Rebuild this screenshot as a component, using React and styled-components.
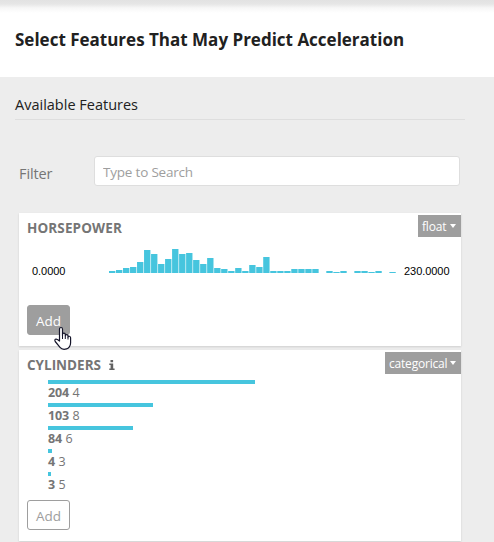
import React from 'react';
import styled, { createGlobalStyle } from 'styled-components';

const GlobalStyle = createGlobalStyle`
  *, *::before, *::after { box-sizing: border-box; }
  body {
    margin: 0;
    overflow: hidden;
    background: #ededed;
    color: #757575;
    font: 14px/20px "Segoe UI", "Open Sans", "Noto Sans", sans-serif;
  }
`;

const Page = styled.div`
  height: 542px;
  overflow: hidden;
  position: relative;
`;

const Header = styled.header`
  height: 77px;
  padding: 27px 15px 0;
  background: linear-gradient(#e2e2e2 0, #e6e6e6 4px, #f7f7f7 8px, #fff 13px);
`;

const Title = styled.h1`
  margin: 0;
  font-size: 17px;
  line-height: 26px;
  font-weight: 700;
  color: #212121;
  white-space: nowrap;
`;

const SectionTitle = styled.h2`
  margin: 0 29px 0 15px;
  padding-top: 16px;
  height: 43px;
  border-bottom: 1px solid #dedede;
  font-size: 14.5px;
  line-height: 23px;
  font-weight: 400;
  color: #212121;
`;

const FilterRow = styled.div`
  display: flex;
  margin: 36px 34px 0 19px;
  height: 30px;
`;

const FilterLabel = styled.label`
  width: 75px;
  padding-top: 8px;
  font-size: 14.5px;
  letter-spacing: -0.1px;
`;

const SearchInput = styled.input`
  flex: 1;
  min-width: 0;
  height: 30px;
  padding: 2px 8px 0;
  border: 1px solid #dedede;
  border-radius: 3px;
  background: #fff;
  font: inherit;
  font-size: 13.5px;
  letter-spacing: -0.2px;
  outline: 0;
  &::placeholder { color: #9e9e9e; opacity: 1; }
`;

const Cards = styled.div`
  display: flex;
  flex-direction: column;
  gap: 4px;
  margin: 27px 33px 0 19px;
`;

const Card = styled.section`
  display: flex;
  flex-direction: column;
  align-items: flex-start;
  height: ${(p) => p.$height}px;
  padding-left: 8px;
  background: #fff;
  box-shadow: 0 1px 2px rgba(0, 0, 0, 0.13);
`;

const CardHeader = styled.div`
  display: flex;
  align-items: flex-start;
  justify-content: space-between;
  align-self: stretch;
  height: 28px;
  padding-top: 2px;
`;

const FeatureName = styled.div`
  display: flex;
  align-items: center;
  gap: 8px;
  padding-top: 3px;
  font-size: 13.5px;
  font-weight: 700;
  letter-spacing: ${(p) => p.$spacing}px;
`;

const TypeBadge = styled.button`
  display: flex;
  align-items: center;
  justify-content: space-between;
  width: ${(p) => p.$width}px;
  height: 22px;
  padding: 1px 5px 0 4px;
  border: 0;
  background: #9e9e9e;
  color: #fff;
  font: inherit;
  font-size: 12px;
  letter-spacing: ${(p) => p.$spacing}px;
`;

const Caret = styled.span`
  border: 4px solid transparent;
  border-width: 4px 3.5px;
  border-top-color: #fff;
  border-bottom: 0;
  margin-bottom: 2px;
`;

const Distribution = styled.div`
  display: flex;
  height: 64px;
  padding: 6px 0 0 5px;
  color: #000;
  font: 11px/14px "Liberation Sans", Arial, sans-serif;
`;

const RangeLabel = styled.span`
  width: ${(p) => p.$width}px;
  padding-top: 17px;
  letter-spacing: -0.05px;
`;

const Histogram = styled.svg`
  display: block;
  width: 295px;
  height: 26px;
`;

const Categories = styled.div`
  margin: 2px 0 5px 21px;
  font-size: 12.5px;
  letter-spacing: -0.2px;
`;

const Category = styled.div`
  height: 23px;
`;

const CategoryBar = styled.div`
  width: ${(p) => p.$width}px;
  height: 4px;
  background: #46c5de;
`;

const CategoryText = styled.div`
  line-height: 18px;
  word-spacing: 0.5px;
  b { font-weight: 700; }
`;

const AddButton = styled.button`
  width: 43px;
  height: 30px;
  padding: 1px 0 0;
  border: 1px solid #9e9e9e;
  border-radius: 3px;
  background: ${(p) => (p.$active ? '#9e9e9e' : '#fff')};
  color: ${(p) => (p.$active ? '#fff' : '#9e9e9e')};
  font: inherit;
  font-size: 13.5px;
`;

const Pointer = styled.svg`
  position: absolute;
  left: 53px;
  top: 326px;
  width: 20px;
  height: 25px;
`;

const InfoIcon = styled.svg`
  width: 6px;
  height: 10px;
`;

const counts = [
  2, 3, 5, 6, 11, 23, 19, 9, 14, 24, 19, 20, 13, 9, 15, 5, 4, 2, 5, 2, 8,
  6, 16, 2, 2, 2, 4, 4, 4, 4, 0, 2, 1, 2, 0, 2, 2, 1, 2, 0, 1,
];

const cylinders = [
  { count: 204, value: 4, width: 207 },
  { count: 103, value: 8, width: 105 },
  { count: 84, value: 6, width: 85 },
  { count: 4, value: 3, width: 4 },
  { count: 3, value: 5, width: 3 },
];

export default function App() {
  return (
    <Page>
      <GlobalStyle />
      <Header>
        <Title>Select Features That May Predict Acceleration</Title>
      </Header>
      <SectionTitle>Available Features</SectionTitle>
      <FilterRow>
        <FilterLabel htmlFor="filter">Filter</FilterLabel>
        <SearchInput id="filter" placeholder="Type to Search" />
      </FilterRow>
      <Cards>
        <Card $height={133}>
          <CardHeader>
            <FeatureName $spacing={0.12}>HORSEPOWER</FeatureName>
            <TypeBadge $width={43} $spacing={-0.2}>float<Caret /></TypeBadge>
          </CardHeader>
          <Distribution>
            <RangeLabel $width={77}>0.0000</RangeLabel>
            <Histogram viewBox="0 0 295 26">
              {counts.map((n, i) => (
                <rect key={i} x={i * 7.01} y={26 - n} width="6.35" height={n} fill="#46c5de" />
              ))}
            </Histogram>
            <RangeLabel $width={50}>230.0000</RangeLabel>
          </Distribution>
          <AddButton $active>Add</AddButton>
        </Card>
        <Card $height={191}>
          <CardHeader>
            <FeatureName $spacing={0}>
              CYLINDERS
              <InfoIcon viewBox="0 0 6 10" fill="#616161">
                <path d="M1.5 0h2.6v2.2H1.5zM.3 3.4h3.9v5H5.6V10H.3V8.4h1.3V5H.3z" />
              </InfoIcon>
            </FeatureName>
            <TypeBadge $width={76} $spacing={-0.2}>categorical<Caret /></TypeBadge>
          </CardHeader>
          <Categories>
            {cylinders.map((c) => (
              <Category key={c.value}>
                <CategoryBar $width={c.width} />
                <CategoryText><b>{c.count}</b> {c.value}</CategoryText>
              </Category>
            ))}
          </Categories>
          <AddButton>Add</AddButton>
        </Card>
      </Cards>
      <Pointer viewBox="0 0 20 25">
        <path
          d="M6.5 15V3.2c0-2.3 3-2.3 3 0v6.3-1c0-1.8 2.8-1.7 2.8.1v1.2c0-1.6 2.7-1.5 2.7.3v1c0-1.3 2.6-1.2 2.6.6v5c0 3.2-2 5.8-4 6.2-2.2.7-5.2.2-6.6-1.5L2.2 15.5c-1.2-1.9.8-3.2 2.2-1.9z"
          fill="#fff" stroke="#15152a" strokeWidth="1.2" strokeLinejoin="round"
        />
        <path d="M9.5 9v4M12.3 10v3M15 11v2.5" stroke="#15152a" strokeWidth="1" />
      </Pointer>
    </Page>
  );
}
